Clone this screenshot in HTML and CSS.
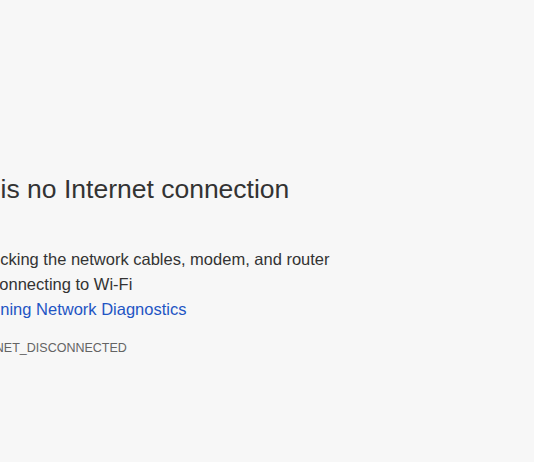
FILE: index.html
```html
<!DOCTYPE html>
<html>
<head>
<meta charset="utf-8">
<link rel="stylesheet" href="styles.css">
</head>
<body>
<div class="interstitial">
  <h1 class="title">There is no Internet connection</h1>
  <p class="try">Try:</p>
  <ul class="suggestions">
    <li>Checking the network cables, modem, and router</li>
    <li>Reconnecting to Wi-Fi</li>
    <li><a class="link" href="#">Running Network Diagnostics</a></li>
  </ul>
  <div class="error-code">ERR_INTERNET_DISCONNECTED</div>
</div>
</body>
</html>
```
FILE: styles.css
```css
html, body {
  margin: 0;
  padding: 0;
  background: #f7f7f7;
  overflow: hidden;
  height: 100%;
}
body {
  font-family: "Liberation Sans", Arial, sans-serif;
  color: #333;
}
.interstitial {
  margin-left: -76px;
  padding-top: 173px;
  width: 700px;
}
.title {
  margin: 0;
  font-size: 26.5px;
  font-weight: normal;
  line-height: 32px;
  color: #333;
}
.try {
  margin: 17px 0 0;
  font-size: 16.5px;
  line-height: 25px;
  height: 25px;
}
.suggestions {
  margin: 0;
  padding-left: 46px;
  list-style: disc;
  font-size: 16.5px;
  line-height: 25px;
}
.link {
  color: #1f55c4;
  text-decoration: none;
}
.error-code {
  margin-top: 18px;
  font-size: 12.5px;
  line-height: 16px;
  color: #646464;
  text-transform: uppercase;
}
```
